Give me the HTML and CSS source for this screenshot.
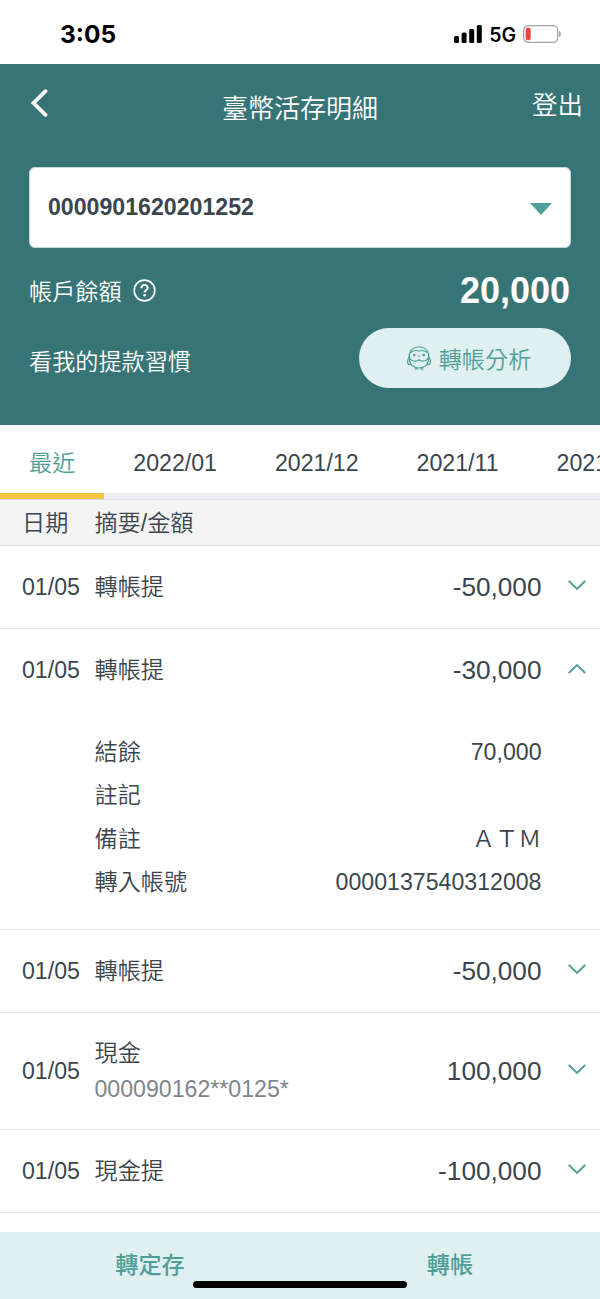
FILE: index.html
```
<!DOCTYPE html>
<html lang="zh-Hant">
<head>
    <meta charset="UTF-8">
    <meta name="viewport" content="width=device-width, initial-scale=1.0">
    <title>臺幣活存明細</title>
    <link rel="stylesheet" href="styles.css">
</head>
<body>
    <div class="status-bar">
        <span class="time">3:05</span>
        <div class="status-icons">
            <svg class="signal" width="28" height="18" viewBox="0 0 28 18">
                <rect x="0" y="11" width="5" height="7" rx="1.5"/>
                <rect x="7.6" y="7.5" width="5" height="10.5" rx="1.5"/>
                <rect x="15.2" y="4" width="5" height="14" rx="1.5"/>
                <rect x="22.8" y="0" width="5" height="18" rx="1.5"/>
            </svg>
            <span class="network">5G</span>
            <svg class="battery" width="38" height="18" viewBox="0 0 38 18">
                <rect x="0.7" y="0.7" width="34" height="16.6" rx="4.6" fill="#fff" stroke="#a3a3a3" stroke-width="1.3"/>
                <rect x="2.7" y="2.8" width="5" height="12.4" rx="2" fill="#e8443a"/>
                <path d="M36.2 6v6c2-.8 2-5.2 0-6z" fill="#8e8e8e"/>
            </svg>
        </div>
    </div>

    <header class="header">
        <div class="nav">
            <svg class="back" width="18" height="30" viewBox="0 0 18 30">
                <path d="M15.5 3.2L3.5 15l12 11.8" fill="none" stroke="#fff" stroke-width="3.8" stroke-linecap="round"/>
            </svg>
            <h1>臺幣活存明細</h1>
            <a class="logout">登出</a>
        </div>
        <div class="account">
            <span>0000901620201252</span>
            <svg width="22" height="12" viewBox="0 0 22 12"><path d="M0 0h22L11 12z" fill="#4f9f98"/></svg>
        </div>
        <div class="balance">
            <span class="label">帳戶餘額</span>
            <svg class="help" width="23" height="23" viewBox="0 0 23 23" fill="none" stroke="#fff">
                <circle cx="11.5" cy="11.5" r="10.3" stroke-width="1.7"/>
                <path d="M8.4 9.2c0-4.2 6.3-4.1 6.3-.4 0 2.3-3.1 2.3-3.1 4.7" stroke-width="2.1"/>
                <circle cx="11.6" cy="16.2" r="1.3" fill="#fff" stroke="none"/>
            </svg>
            <strong>20,000</strong>
        </div>
        <div class="habit">
            <span class="label">看我的提款習慣</span>
            <a class="analysis">
                <svg width="24" height="24" viewBox="0 0 24 24" fill="none" stroke="#4f9f98" stroke-width="1.2" stroke-linecap="round">
                    <path d="M2.2 11C2.2 4.5 6 1 12 1s9.800 3.500 9.800 10"/>
                    <path d="M2.200 11C.3 13.500.2 17 1.500 18.200c.9.700 1.800.3 2.300-.4M21.800 11c1.900 2.500 2 6 .7 7.200-.9.700-1.800.3-2.300-.4"/>
                    <path d="M2.400 12c-.3 6.500 3.800 10 9.600 10s9.900-3.500 9.600-10"/>
                    <path d="M3.500 6.500C6.500 4.200 9.500 4.200 12 5c2.500-.8 5.500-.8 8.500 1.500"/>
                    <path d="M2.200 10c0 5 6.500 6.300 9.800 3.800 3.300 2.500 9.800 1.200 9.800-3.800"/>
                    <path d="M8.2 23.200l1-.8 1 .8M13.8 23.200l1-.8 1 .8"/>
                    <path d="M11.4 9.700h1.200l-.6.7z" fill="#4f9f98" stroke-width=".6"/>
                    <circle cx="7.3" cy="9" r="1.3" fill="#4f9f98" stroke="none"/>
                    <circle cx="16.7" cy="9" r="1.3" fill="#4f9f98" stroke="none"/>
                </svg>
                <span>轉帳分析</span>
            </a>
        </div>
    </header>

    <nav class="tabs">
        <a class="tab active">最近</a>
        <a class="tab">2022/01</a>
        <a class="tab">2021/12</a>
        <a class="tab">2021/11</a>
        <a class="tab">2021/10</a>
    </nav>

    <main>
        <div class="list-head">
            <span class="date">日期</span>
            <span>摘要/金額</span>
        </div>

        <div class="item">
            <div class="row">
                <span class="date">01/05</span>
                <span class="summary">轉帳提</span>
                <span class="amount">-50,000</span>
                <svg class="arrow" width="18" height="11" viewBox="0 0 18 11"><path d="M1.3 1.5L9 8.9l7.7-7.4"/></svg>
            </div>
        </div>

        <div class="item open">
            <div class="row">
                <span class="date">01/05</span>
                <span class="summary">轉帳提</span>
                <span class="amount">-30,000</span>
                <svg class="arrow" width="18" height="11" viewBox="0 0 18 11"><path d="M1.3 9.5L9 2.1l7.7 7.4"/></svg>
            </div>
            <dl class="detail">
                <div><dt>結餘</dt><dd>70,000</dd></div>
                <div><dt>註記</dt><dd></dd></div>
                <div><dt>備註</dt><dd>ＡＴＭ</dd></div>
                <div><dt>轉入帳號</dt><dd>0000137540312008</dd></div>
            </dl>
        </div>

        <div class="item">
            <div class="row">
                <span class="date">01/05</span>
                <span class="summary">轉帳提</span>
                <span class="amount">-50,000</span>
                <svg class="arrow" width="18" height="11" viewBox="0 0 18 11"><path d="M1.3 1.5L9 8.9l7.7-7.4"/></svg>
            </div>
        </div>

        <div class="item">
            <div class="row tall">
                <span class="date">01/05</span>
                <span class="summary">現金<small>000090162**0125*</small></span>
                <span class="amount">100,000</span>
                <svg class="arrow" width="18" height="11" viewBox="0 0 18 11"><path d="M1.3 1.5L9 8.9l7.7-7.4"/></svg>
            </div>
        </div>

        <div class="item">
            <div class="row">
                <span class="date">01/05</span>
                <span class="summary">現金提</span>
                <span class="amount">-100,000</span>
                <svg class="arrow" width="18" height="11" viewBox="0 0 18 11"><path d="M1.3 1.5L9 8.9l7.7-7.4"/></svg>
            </div>
        </div>
    </main>

    <footer class="actions">
        <a>轉定存</a>
        <a>轉帳</a>
        <div class="home-indicator"></div>
    </footer>
</body>
</html>
```

FILE: styles.css
```
* {
    box-sizing: border-box;
}
body {
    display: flex;
    flex-direction: column;
    height: 1299px;
    margin: 0;
    overflow: hidden;
    background: #fff;
    color: #3a464e;
    font-family: "Liberation Sans", "Noto Sans CJK TC", sans-serif;
    font-size: 23.15px;
    font-weight: 350;
    line-height: 36px;
}
svg {
    display: block;
    flex: none;
}

/* status bar */
.status-bar {
    flex: none;
    display: flex;
    align-items: center;
    justify-content: space-between;
    height: 64px;
    padding: 4px 39px 0 60px;
    color: #000;
    font-family: Inter, sans-serif;
}
.time {
    font-size: 24.5px;
    font-weight: 700;
}
.status-icons {
    display: flex;
    align-items: center;
}
.network {
    margin: 1px 7px 0 7px;
    font-size: 19.5px;
    font-weight: 600;
}

/* header */
.header {
    flex: none;
    height: 361px;
    padding: 0 29px;
    background: #377476;
    color: #fff;
}
.nav {
    display: flex;
    justify-content: space-between;
    height: 103px;
    margin-right: -12px;
    padding-top: 23px;
}
.back {
    margin: 1px 0 0 1px;
}
h1 {
    margin: 4px 0 0 20px;
    font-size: 26px;
    font-weight: 350;
}
.logout {
    font-size: 25.5px;
}
.account {
    display: flex;
    align-items: center;
    justify-content: space-between;
    height: 81px;
    padding: 0 18px 2px;
    border: 1px solid #c8d8dc;
    border-radius: 6px;
    background: #fff;
    color: #3a464e;
    font-weight: 700;
}
.account svg {
    margin-top: 4px;
}
.balance {
    display: flex;
    align-items: center;
    height: 80px;
    padding-top: 6px;
}
.balance .label {
    padding-top: 2px;
}
.help {
    margin: -2px 0 0 11px;
}
.balance strong {
    margin: 0 1px 0 auto;
    font-size: 36px;
    font-weight: 700;
}
.habit {
    display: flex;
    align-items: center;
    justify-content: space-between;
}
.habit .label {
    margin-top: 7px;
}
.analysis {
    display: flex;
    align-items: center;
    justify-content: center;
    gap: 8px;
    width: 212px;
    height: 60px;
    padding: 0 0 1px 8px;
    border-radius: 30px;
    background: #e0f0f0;
    color: #4f9f98;
}
.analysis span {
    padding-top: 5px;
}

/* month tabs */
.tabs {
    flex: none;
    display: flex;
    height: 74px;
    overflow: hidden;
    box-shadow: inset 0 -6px #ececf0;
}
.tab {
    flex: none;
    height: 74px;
    padding: 20px 29px 0;
}
.tab.active {
    border-bottom: 6px solid #f4c542;
    color: #4f9f98;
}

/* transactions */
main {
    flex: 1;
}
.list-head {
    display: flex;
    align-items: center;
    height: 47px;
    padding-left: 22px;
    border-top: 1px solid #dcdce4;
    border-bottom: 1px solid #dadde0;
    background: #f4f4f4;
}
.item {
    border-bottom: 1px solid #e2e4e6;
}
.row {
    display: flex;
    align-items: center;
    height: 82px;
    padding: 0 14.5px 0 22px;
}
.row.tall {
    height: 116px;
}
.date {
    flex: none;
    width: 72.5px;
}
.summary small {
    display: block;
    color: #7f868b;
    font-size: 23.15px;
}
.amount {
    margin-left: auto;
    font-size: 26.2px;
}
.arrow {
    margin: -4px 0 0 26px;
    fill: none;
    stroke: #4f9f98;
    stroke-width: 2;
    stroke-linecap: round;
}
.detail {
    margin: 0;
    padding: 20px 58.5px 24.4px 94.5px;
}
.detail div {
    display: flex;
    justify-content: space-between;
    line-height: 43.4px;
}
.detail dd {
    margin: 0;
}

/* bottom actions */
.actions {
    flex: none;
    position: relative;
    display: flex;
    height: 67px;
    padding-top: 15px;
    background: #e0f0f0;
    color: #4f9f98;
    font-weight: 500;
}
.actions a {
    flex: 1;
    text-align: center;
}
.home-indicator {
    position: absolute;
    left: 193px;
    bottom: 11px;
    width: 214px;
    height: 7px;
    border-radius: 4px;
    background: #000;
}
```
